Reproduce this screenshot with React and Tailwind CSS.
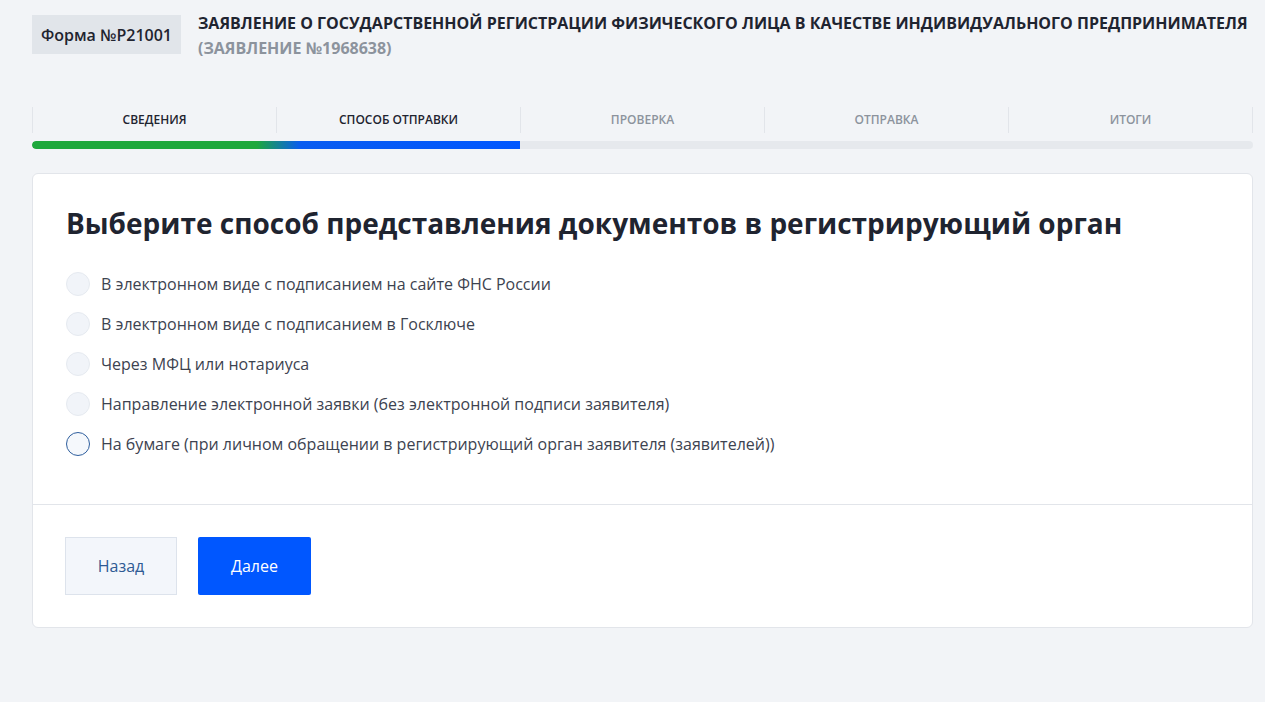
import React from "react";

const steps = [
  { label: "Сведения", active: true },
  { label: "Способ отправки", active: true },
  { label: "Проверка", active: false },
  { label: "Отправка", active: false },
  { label: "Итоги", active: false },
];

const options = [
  { label: "В электронном виде с подписанием на сайте ФНС России", focused: false },
  { label: "В электронном виде с подписанием в Госключе", focused: false },
  { label: "Через МФЦ или нотариуса", focused: false },
  { label: "Направление электронной заявки (без электронной подписи заявителя)", focused: false },
  { label: "На бумаге (при личном обращении в регистрирующий орган заявителя (заявителей))", focused: true },
];

function Radio({ focused }) {
  return (
    <span
      className={
        "block w-6 h-6 rounded-full shrink-0 " +
        (focused
          ? "border-[1.5px] border-[#2f5f9e] bg-[#f5f8fc]"
          : "border border-[#e6eaf0] bg-[#f1f4f9]")
      }
    />
  );
}

export default function App() {
  return (
    <div
      className="min-h-[702px] bg-[#f2f4f7] pl-8 pr-3 pt-[15px] pb-10 text-[#1f2430]"
      style={{ fontFamily: '"Open Sans", "Noto Sans", sans-serif' }}
    >
      {/* header */}
      <div className="flex items-start gap-[17px]">
        <div className="bg-[#e1e5ea] h-[39px] px-[9px] flex items-center text-[16px] font-semibold text-[#1f2430] whitespace-nowrap">
          Форма №P21001
        </div>
        <div className="-mt-[4px] text-[16px] leading-[25px] font-bold uppercase">
          <div className="text-[#1f2430]">
            Заявление о государственной регистрации физического лица в качестве индивидуального предпринимателя
          </div>
          <div className="text-[#8c939d]">(Заявление №1968638)</div>
        </div>
      </div>

      {/* steps */}
      <div className="mt-[46px]">
        <div className="grid grid-cols-5 border-l border-[#e2e5ea]">
          {steps.map((s) => (
            <div
              key={s.label}
              className={
                "h-[26px] border-r border-[#e2e5ea] flex items-center justify-center text-[12px] font-semibold uppercase " +
                (s.active ? "text-[#1f2430]" : "text-[#8c939d]")
              }
            >
              {s.label}
            </div>
          ))}
        </div>
        <div className="mt-[8px] h-[8px] rounded-full bg-[#e6e9ed] overflow-hidden">
          <div className="h-full w-[40%] rounded-l-full bg-[linear-gradient(to_right,#1ea83c_0%,#1ea83c_46%,#0a5cf0_55%,#0057ff_100%)]" />
        </div>
      </div>

      {/* card */}
      <div className="mt-[24px] bg-white border border-[#e2e5ea] rounded-[6px]">
        <div className="px-[33px] pt-[29px] pb-[48px]">
          <h1 className="text-[28px] leading-[40px] font-bold text-[#1f2430]">
            Выберите способ представления документов в регистрирующий орган
          </h1>
          <div className="mt-[29px] flex flex-col gap-4">
            {options.map((o) => (
              <label key={o.label} className="flex items-center gap-[11px] h-6 cursor-pointer">
                <Radio focused={o.focused} />
                <span className="text-[16px] text-[#3d4350]">{o.label}</span>
              </label>
            ))}
          </div>
        </div>
        <div className="border-t border-[#e2e5ea] px-[32px] pt-[32px] pb-[32px] flex gap-[21px]">
          <button className="w-[112px] h-[58px] bg-[#f3f6fb] border border-[#dde3ec] text-[16px] text-[#2e5a94]">
            Назад
          </button>
          <button className="w-[113px] h-[58px] bg-[#0057ff] rounded-[2px] text-[16px] text-white">
            Далее
          </button>
        </div>
      </div>
    </div>
  );
}
